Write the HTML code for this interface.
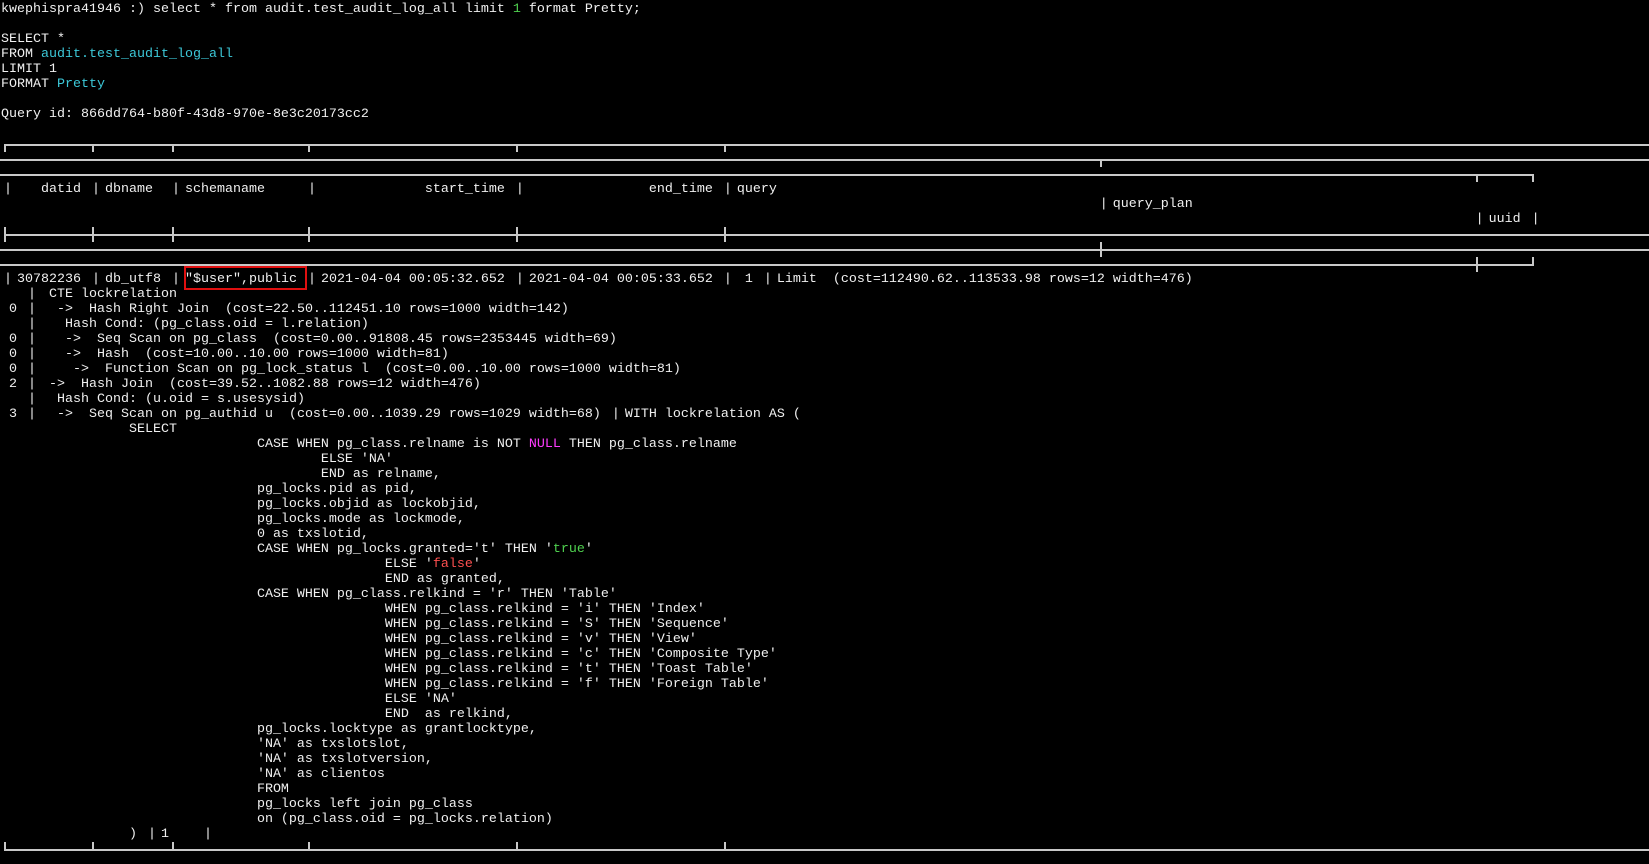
<!DOCTYPE html>
<html><head><meta charset="utf-8"><style>
html,body{margin:0;padding:0;background:#000;width:1649px;height:864px;overflow:hidden;position:relative}
pre{position:absolute;left:1px;top:2px;margin:0;font-family:"Liberation Mono","DejaVu Sans Mono",monospace;font-size:13.33px;line-height:15px;color:#f0f0f0;white-space:pre}
.c{color:#3cc8d8}.g{color:#4fd04f}.r{color:#ff5050}.m{color:#ff3cff}
.p{position:relative;left:3px}
.h{position:absolute;height:2px;background:#c8c8c8}
.v{position:absolute;width:2px;background:#c8c8c8}
.box{position:absolute;left:184px;top:266px;width:119px;height:20px;border:2px solid #e01010}
</style></head><body>
<pre id="t">kwephispra41946 :) select * from audit.test_audit_log_all limit <span class="g">1</span> format Pretty;

SELECT *
FROM <span class="c">audit.test_audit_log_all</span>
LIMIT 1
FORMAT <span class="c">Pretty</span>

Query id: 866dd764-b80f-43d8-970e-8e3c20173cc2




|    datid | dbname  | schemaname     |              start_time |                end_time | query
                                                                                                                                         | query_plan
                                                                                                                                                                                        | uuid |



| 30782236 | db_utf8 | "$user",public | 2021-04-04 00:05:32.652 | 2021-04-04 00:05:33.652 |  1 | Limit  (cost=112490.62..113533.98 rows=12 width=476)
   |  CTE lockrelation
 0 |   ->  Hash Right Join  (cost=22.50..112451.10 rows=1000 width=142)
   |    Hash Cond: (pg_class.oid = l.relation)
 0 |    ->  Seq Scan on pg_class  (cost=0.00..91808.45 rows=2353445 width=69)
 0 |    ->  Hash  (cost=10.00..10.00 rows=1000 width=81)
 0 |     ->  Function Scan on pg_lock_status l  (cost=0.00..10.00 rows=1000 width=81)
 2 |  ->  Hash Join  (cost=39.52..1082.88 rows=12 width=476)
   |   Hash Cond: (u.oid = s.usesysid)
 3 |   ->  Seq Scan on pg_authid u  (cost=0.00..1039.29 rows=1029 width=68) | WITH lockrelation AS (
                SELECT
                                CASE WHEN pg_class.relname is NOT <span class="m">NULL</span> THEN pg_class.relname
                                        ELSE 'NA'
                                        END as relname,
                                pg_locks.pid as pid,
                                pg_locks.objid as lockobjid,
                                pg_locks.mode as lockmode,
                                0 as txslotid,
                                CASE WHEN pg_locks.granted='t' THEN '<span class="g">true</span>'
                                                ELSE '<span class="r">false</span>'
                                                END as granted,
                                CASE WHEN pg_class.relkind = 'r' THEN 'Table'
                                                WHEN pg_class.relkind = 'i' THEN 'Index'
                                                WHEN pg_class.relkind = 'S' THEN 'Sequence'
                                                WHEN pg_class.relkind = 'v' THEN 'View'
                                                WHEN pg_class.relkind = 'c' THEN 'Composite Type'
                                                WHEN pg_class.relkind = 't' THEN 'Toast Table'
                                                WHEN pg_class.relkind = 'f' THEN 'Foreign Table'
                                                ELSE 'NA'
                                                END  as relkind,
                                pg_locks.locktype as grantlocktype,
                                'NA' as txslotslot,
                                'NA' as txslotversion,
                                'NA' as clientos
                                FROM
                                pg_locks left join pg_class
                                on (pg_class.oid = pg_locks.relation)
                ) | 1    |</pre>
<script>var t=document.getElementById('t');t.innerHTML=t.innerHTML.replace(/\|/g,'<span class="p">|</span>');</script>
<div class="box"></div>
<div class="h" style="left:4px;top:144px;width:1645px"></div>
<div class="v" style="left:4px;top:144px;height:8px"></div>
<div class="v" style="left:92px;top:144px;height:8px"></div>
<div class="v" style="left:172px;top:144px;height:8px"></div>
<div class="v" style="left:308px;top:144px;height:8px"></div>
<div class="v" style="left:516px;top:144px;height:8px"></div>
<div class="v" style="left:724px;top:144px;height:8px"></div>
<div class="h" style="left:0;top:159px;width:1649px"></div>
<div class="v" style="left:1100px;top:159px;height:8px"></div>
<div class="h" style="left:0;top:174px;width:1534px"></div>
<div class="v" style="left:1476px;top:174px;height:8px"></div>
<div class="v" style="left:1532px;top:174px;height:8px"></div>
<div class="h" style="left:4px;top:234px;width:1645px"></div>
<div class="v" style="left:4px;top:227px;height:15px"></div>
<div class="v" style="left:92px;top:227px;height:15px"></div>
<div class="v" style="left:172px;top:227px;height:15px"></div>
<div class="v" style="left:308px;top:227px;height:15px"></div>
<div class="v" style="left:516px;top:227px;height:15px"></div>
<div class="v" style="left:724px;top:227px;height:15px"></div>
<div class="h" style="left:0;top:249px;width:1649px"></div>
<div class="v" style="left:1100px;top:242px;height:15px"></div>
<div class="h" style="left:0;top:264px;width:1534px"></div>
<div class="v" style="left:1476px;top:257px;height:15px"></div>
<div class="v" style="left:1532px;top:257px;height:9px"></div>
<div class="h" style="left:4px;top:849px;width:1645px"></div>
<div class="v" style="left:4px;top:842px;height:9px"></div>
<div class="v" style="left:92px;top:842px;height:9px"></div>
<div class="v" style="left:172px;top:842px;height:9px"></div>
<div class="v" style="left:308px;top:842px;height:9px"></div>
<div class="v" style="left:516px;top:842px;height:9px"></div>
<div class="v" style="left:724px;top:842px;height:9px"></div>
</body></html>
